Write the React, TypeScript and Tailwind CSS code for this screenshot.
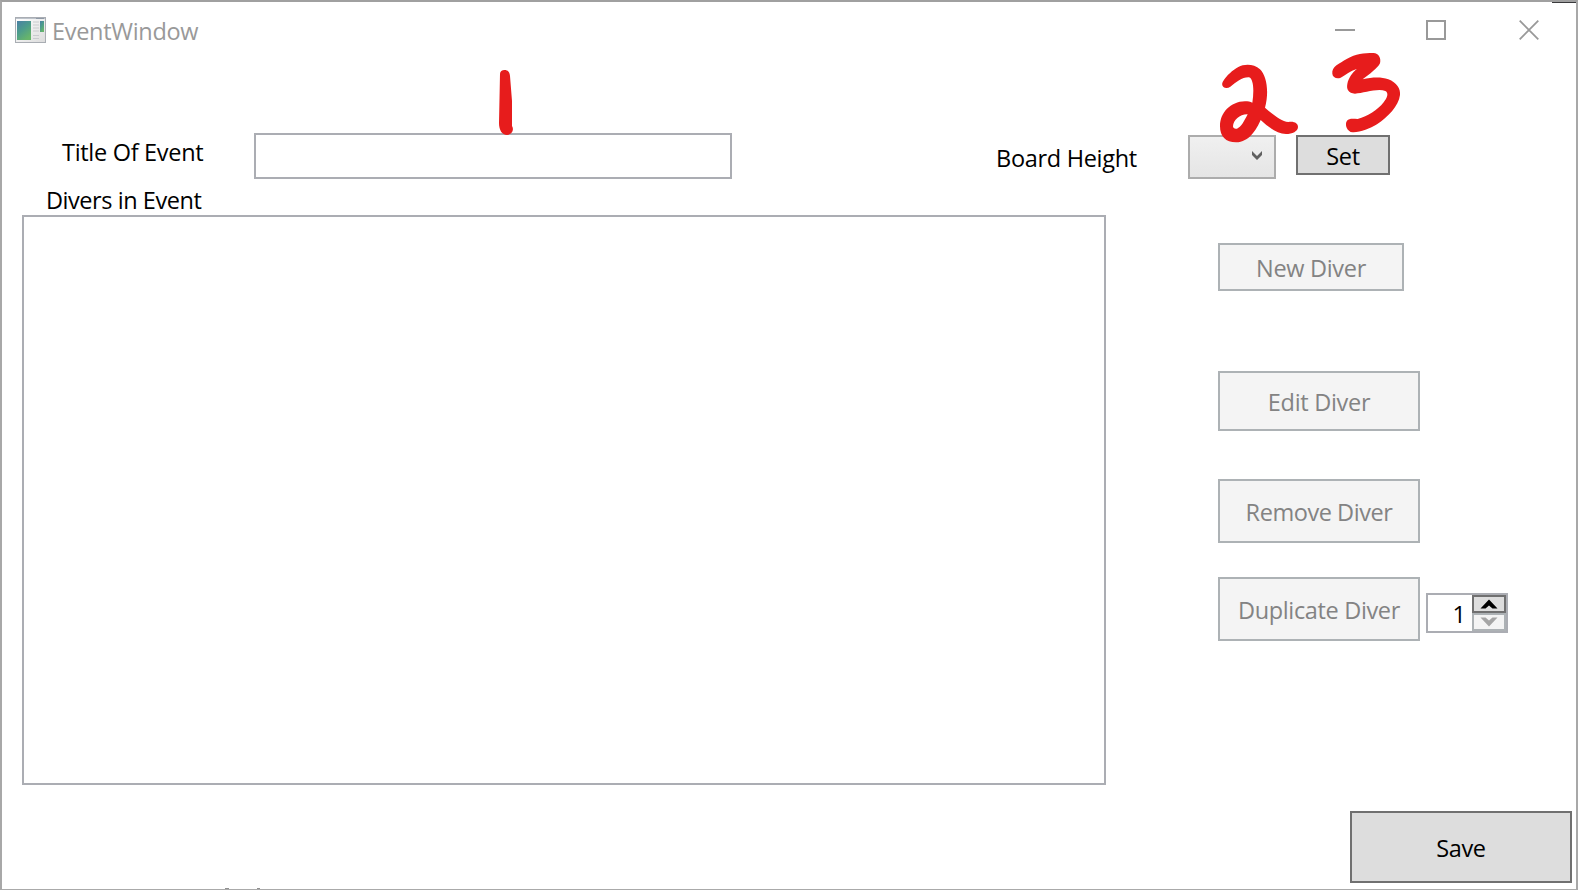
import React from "react";

const base =
  "flex items-center justify-center whitespace-nowrap border-2 pt-0.5 leading-8";
const enabled = "border-[#707070] bg-[#dddddd] text-black";
const disabled = "border-[#adb2b5] bg-[#f4f4f4] text-[#838383]";

function Button({ className, children, off }: { className: string; children: React.ReactNode; off?: boolean }) {
  return (
    <button type="button" disabled={off} className={`${base} ${off ? disabled : enabled} ${className}`}>
      {children}
    </button>
  );
}

function AppIcon() {
  return (
    <svg width="32" height="26" viewBox="0 0 32 26" className="block">
      <defs>
        <linearGradient id="pane" x1="0" y1="0" x2="0.6" y2="1">
          <stop offset="0" stopColor="#4a7fa5" />
          <stop offset="0.5" stopColor="#4c9c8c" />
          <stop offset="1" stopColor="#67b56b" />
        </linearGradient>
        <linearGradient id="frame" x1="0" y1="0" x2="1" y2="1">
          <stop offset="0" stopColor="#ffffff" />
          <stop offset="1" stopColor="#dcdcdc" />
        </linearGradient>
      </defs>
      <rect x="0.5" y="0.5" width="30" height="25" fill="url(#frame)" stroke="#a9adb3" />
      <path d="M1 1.500H30" stroke="#bcc2ca" />
      <path d="M21 1.500H29" stroke="#8f99a6" />
      <rect x="2" y="4" width="14" height="19" fill="url(#pane)" />
      <path d="M18 5h6M18 8h6M18 11h6M18 14h6M18 18.500h6M18 21.500h6" stroke="#c9cbce" strokeWidth="1.200" />
      <rect x="25" y="4" width="4" height="11" fill="url(#pane)" />
    </svg>
  );
}

function TitleBar() {
  return (
    <header className="flex h-[58px] shrink-0 items-start text-[#999999]">
      <div className="ml-[13px] mt-[15px]"><AppIcon /></div>
      <h1 className="ml-[5px] mt-[13px] flex-1 leading-8 tracking-[-0.3px]">EventWindow</h1>
      <svg width="20" height="20" className="mr-[71px] mt-[18px]" aria-label="Minimize">
        <path d="M0 10H20" stroke="#999" strokeWidth="2" />
      </svg>
      <svg width="20" height="20" className="mr-[73px] mt-[18px]" aria-label="Maximize">
        <rect x="1" y="1" width="18" height="18" fill="none" stroke="#999" strokeWidth="2" />
      </svg>
      <svg width="20" height="20" className="mr-[37px] mt-[18px]" aria-label="Close">
        <path d="M0.700 0.700L19.300 19.300M19.300 0.700L0.700 19.300" stroke="#999" strokeWidth="1.800" />
      </svg>
    </header>
  );
}

function Spinner() {
  return (
    <div className="ml-[6px] mt-4 flex h-10 w-[82px] border-2 border-[#abadb3] bg-white">
      <span className="flex-1 pr-[6px] pt-[3px] text-right leading-8">1</span>
      <div className="flex w-[34px] flex-col">
        <button type="button" className="flex h-[18px] items-center justify-center border-2 border-[#707070] bg-[#dddddd]">
          <svg width="18" height="10"><path d="M9 0.500L17.500 9.500H12.500L9 6.500L5.500 9.500H0.500Z" fill="#000" /></svg>
        </button>
        <button type="button" disabled className="flex h-[18px] items-center justify-center border-2 border-[#adb2b5] bg-[#f4f4f4]">
          <svg width="18" height="10"><path d="M9 9.500L17.500 0.500H12.500L9 3.500L5.500 0.500H0.500Z" fill="#a5a5a5" /></svg>
        </button>
      </div>
    </div>
  );
}

function InkNotes() {
  return (
    <svg width="1578" height="200" className="pointer-events-none absolute -left-0.5 -top-0.5" fill="#e71c1c">
      <path d="M504.500 70C508 70 509.500 72 510 76L512 101V126C514.500 130 511.500 135 507 135C502 135 499 130 499 123L500 74C500 71.500 502 70 504.500 70Z" />
      <g transform="translate(1180 40) scale(0.33333)">
        <path
          fillRule="evenodd"
          d="M128 126C140 106 158 90 175 81C193 71 222 71 240 88C260 107 268 155 255 203C277 222 304 244 325 246C343 243 354 250 354 261C354 274 337 282 318 282C292 281 267 263 242 240C230 267 208 307 168 307C137 307 120 289 120 258C120 219 151 185 195 184C204 184 211 185 217 188C222 157 222 117 207 112C187 111 169 126 151 140C139 149 121 142 128 126ZM203 223C180 222 160 240 159 259C159 265 165 268 171 266C183 262 193 243 203 223Z"
        />
        <path d="M457 101C454 80 479 70 500 57C528 41 551 39 580 39C597 40 604 55 600 70C593 85 569 102 548 118C576 112 602 110 625 118C650 128 662 146 660 165C656 199 623 231 591 253C570 266 540 278 518 277C501 275 493 253 501 242C507 235 517 236 533 237C564 229 592 211 611 187C622 173 627 159 616 153C592 144 551 160 525 161C505 159 499 148 502 132C506 112 517 99 530 87C511 93 497 105 482 113C470 118 458 112 457 101Z" />
      </g>
    </svg>
  );
}

function Backdrop() {
  return (
    <svg width="1578" height="890" className="pointer-events-none absolute -left-0.5 -top-0.5">
      <path d="M0 0.500H1552" stroke="#e2e2e2" />
      <path d="M1552 0H1578V88H1576V3H1552Z" fill="#3a3a3c" />
      <path d="M0 50h2v2h-2zM0 92h2v2h-2zM0 162h2v2h-2zM0 768h2v2h-2zM0 851h2v3h-2z" fill="#808080" />
      <path d="M0 53h2v6h-2z" fill="#eeeeee" />
      <path d="M0 127h2v17h-2z" fill="#26262c" />
      <path d="M1 129h1v5h-1zM1 136h1v6h-1z" fill="#5d6f96" />
      <path d="M1 70h1v3h-1zM1 79h1v3h-1z" fill="#80653c" />
      <path d="M1576 185h2v2h-2zM1576 486h2v2h-2z" fill="#707070" />
      <path d="M225 888h4v2h-4zM257 888h3v2h-3z" fill="#909090" />
    </svg>
  );
}

export default function App() {
  return (
    <div className="relative flex h-[890px] w-[1578px] flex-col overflow-hidden border-x-2 border-b border-t-2 border-x-[#a8a8a8] border-b-[#aaaaaa] border-t-[#a0a0a0] bg-white font-['Open_Sans','Noto_Sans',sans-serif] text-[23.500px] text-black">
      <TitleBar />
      <main className="flex flex-1 items-start">
        <section className="w-[1104px] shrink-0 pl-5">
          <div className="flex h-[126px] items-start pt-[73px]">
            <label className="ml-10 w-[192px] shrink-0 pt-[3px] leading-8 tracking-[-0.3px]">Title Of Event</label>
            <input className="h-[46px] w-[478px] shrink-0 border-2 border-[#abadb3] outline-none" aria-label="Title Of Event" />
            <label className="ml-[264px] shrink-0 whitespace-nowrap pt-[9px] leading-8 tracking-[-0.300px]">Board Height</label>
          </div>
          <h2 className="-mt-[2px] ml-6 h-[31px] leading-8 tracking-[-0.45px]">Divers in Event</h2>
          <div className="h-[570px] w-[1084px] border-2 border-[#abadb3]" />
        </section>
        <aside className="flex w-[470px] shrink-0 flex-col pt-[75px]">
          <div className="flex items-start pl-[82px]">
            <div className="flex h-11 w-[88px] items-start justify-end border-2 border-[#acacac] bg-gradient-to-b from-[#f0f0f0] to-[#e5e5e5] pr-[12px] pt-[14px]">
              <svg width="10" height="9"><path d="M0 0L5 5L10 0V4L5 9L0 4Z" fill="#606060" /></svg>
            </div>
            <Button className="ml-5 h-10 w-[94px] tracking-[-0.3px]">Set</Button>
          </div>
          <div className="flex flex-col items-start pl-[112px] pt-16">
            <Button off className="h-12 w-[186px] tracking-[-0.3px]">New Diver</Button>
            <Button off className="mt-20 h-[60px] w-[202px] tracking-[-0.3px]">Edit Diver</Button>
            <Button off className="mt-12 h-16 w-[202px] tracking-[-0.45px]">Remove Diver</Button>
            <div className="mt-[34px] flex items-start">
              <Button off className="h-16 w-[202px] tracking-[-0.35px]">Duplicate Diver</Button>
              <Spinner />
            </div>
          </div>
          <Button className="mr-1 mt-[170px] h-[72px] w-[222px] self-end tracking-[-0.4px]">Save</Button>
        </aside>
      </main>
      <Backdrop />
      <InkNotes />
    </div>
  );
}
